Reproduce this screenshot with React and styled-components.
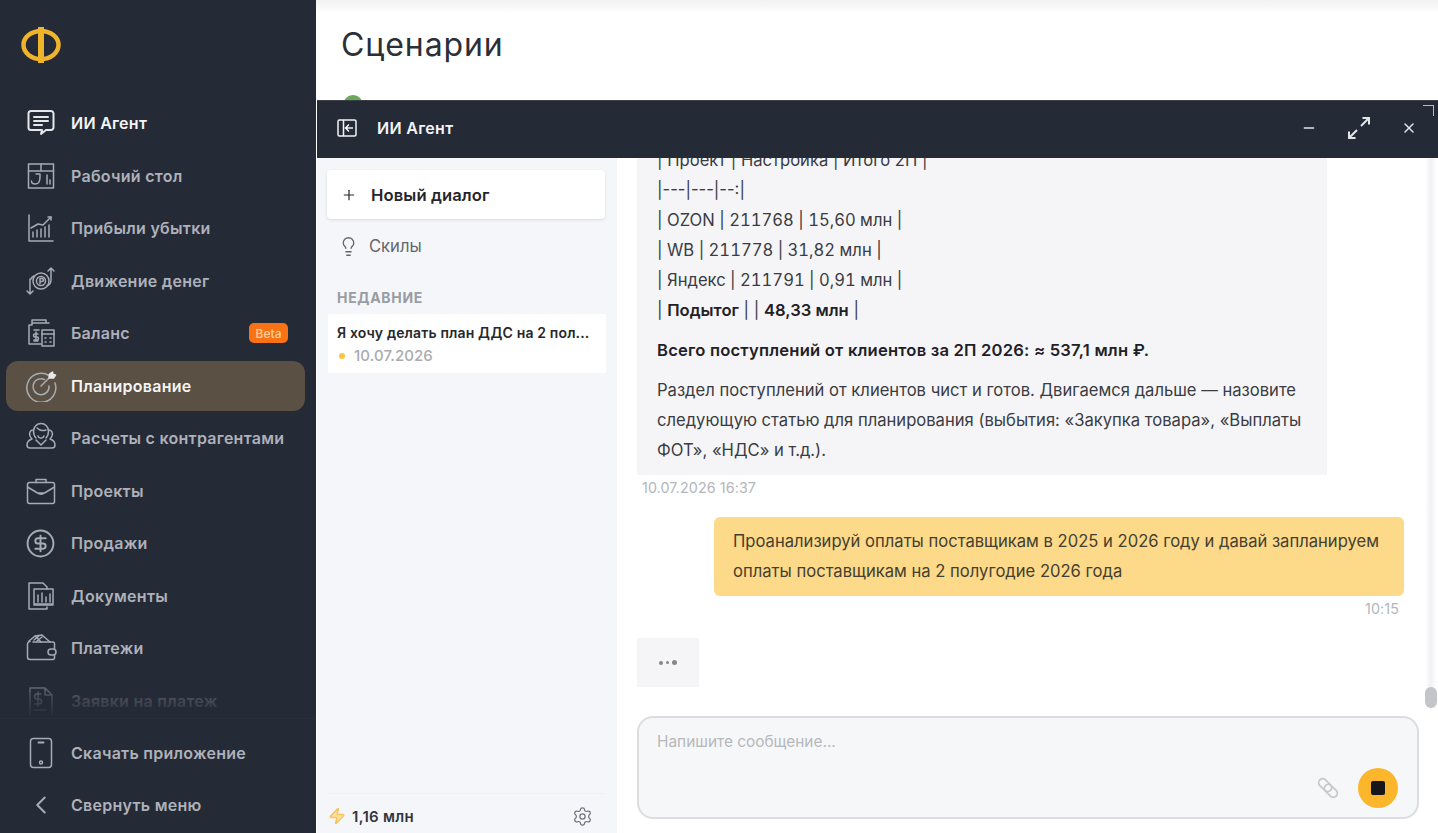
import React from 'react';
import styled, { createGlobalStyle } from 'styled-components';
import { Plus, Lightbulb, Minus, X, Settings, Zap, ChevronLeft, CircleDollarSign } from 'lucide-react';

const GlobalStyle = createGlobalStyle`
  html, body {
    margin: 0;
    height: 100%;
    background: #fff;
  }
  body {
    font-family: Inter, "Noto Sans", "Liberation Sans", sans-serif;
    overflow: hidden;
  }
  * {
    box-sizing: border-box;
  }
`;

const Page = styled.div`
  display: flex;
  height: 833px;
  overflow: hidden;
`;

const Sidebar = styled.aside`
  display: flex;
  flex-direction: column;
  flex: 0 0 316px;
  height: 833px;
  background: #252a37;
`;

const LogoWrap = styled.div`
  display: flex;
  align-items: center;
  height: 98px;
  padding: 0 0 8px 20px;
`;

const Nav = styled.nav`
  position: relative;
  flex: 1;
  min-height: 0;
  overflow: hidden;
  display: flex;
  flex-direction: column;
  gap: 2.5px;
  padding: 0 11px 0 6px;

  &::after {
    content: '';
    position: absolute;
    left: 0;
    right: 0;
    bottom: 0;
    height: 48px;
    background: linear-gradient(to bottom, rgba(37, 42, 55, 0.1), rgba(37, 42, 55, 0.72) 55%, #252a37);
  }
`;

const NavItem = styled.a`
  display: flex;
  align-items: center;
  flex: 0 0 50px;
  gap: 13px;
  padding: 0 17px;
  border-radius: 12px;
  color: ${p => (p.$bright ? '#f4f4f5' : '#aeb1b9')};
  background: ${p => (p.$active ? '#5a5044' : 'transparent')};
  font-size: 16px;
  font-weight: 600;
  letter-spacing: 0.27px;
  white-space: nowrap;
`;

const IconSlot = styled.span`
  display: flex;
  justify-content: center;
  flex: 0 0 35px;
  color: ${p => (p.$bright ? '#e6e7ea' : '#a7abb4')};
`;

const BetaBadge = styled.span`
  margin-left: auto;
  padding: 2.5px 6.5px;
  border-radius: 5px;
  background: #f97316;
  color: #ffcf9a;
  font-size: 12px;
  font-weight: 500;
  letter-spacing: 0;
  line-height: 15px;
`;

const SidebarFooter = styled.div`
  display: flex;
  flex-direction: column;
  gap: 2px;
  height: 115px;
  padding: 9px 11px 0 6px;
  border-top: 1px solid #2a2f3c;
`;

const Main = styled.main`
  position: relative;
  flex: 1;
  min-width: 0;
  background: linear-gradient(to bottom, #f2f2f3, #fff 14px);
`;

const Title = styled.h1`
  margin: 0;
  padding: 24px 0 0 25px;
  font-size: 32px;
  font-weight: 400;
  line-height: 42px;
  color: #2b2f38;
  letter-spacing: 0.9px;
`;

const StatusDot = styled.span`
  display: block;
  width: 20px;
  height: 20px;
  margin: 29px 0 0 27px;
  border-radius: 50%;
  background: #6aa85a;
`;

const AgentWindow = styled.section`
  position: absolute;
  left: 1px;
  right: 0;
  top: 100px;
  bottom: 0;
  display: flex;
  flex-direction: column;
  background: #fff;
`;

const WindowHeader = styled.header`
  position: relative;
  display: flex;
  align-items: center;
  flex: 0 0 58px;
  padding: 0 21px 3px 20px;
  background: #252a37;
  color: #f4f4f5;
  border-top: 1px solid #3b3e47;
`;

const WindowTitle = styled.span`
  margin-left: 20px;
  font-size: 16px;
  font-weight: 600;
  letter-spacing: 0.3px;
`;

const HeaderActions = styled.div`
  display: flex;
  align-items: center;
  gap: 30px;
  margin-left: auto;
  color: #e4e5e8;
`;

const ResizeCorner = styled.span`
  position: absolute;
  top: 4px;
  right: 4px;
  width: 11px;
  height: 11px;
  border-top: 1.5px solid #b9bbc1;
  border-right: 1.5px solid #b9bbc1;
`;

const WindowBody = styled.div`
  flex: 1;
  min-height: 0;
  display: flex;
`;

const Dialogs = styled.div`
  display: flex;
  flex-direction: column;
  flex: 0 0 300px;
  padding: 12px 12px 0 10px;
  background: #f5f6f9;
`;

const NewDialog = styled.button`
  display: flex;
  align-items: center;
  gap: 14px;
  height: 49px;
  padding: 0 14px;
  border: 0;
  border-radius: 4px;
  background: #fff;
  box-shadow: 0 1px 3px rgba(30, 35, 50, 0.12);
  color: #24262c;
  font: 600 16.6px Inter, sans-serif;
  letter-spacing: 0.1px;
`;

const SkillsRow = styled.div`
  display: flex;
  align-items: center;
  gap: 10px;
  height: 54px;
  padding-left: 11px;
  color: #64666d;
  font-size: 16.6px;
`;

const SectionLabel = styled.div`
  margin-top: 15px;
  padding-left: 10px;
  color: #9a9ca3;
  font-size: 14px;
  font-weight: 700;
  line-height: 20px;
  letter-spacing: 0.7px;
`;

const ChatCard = styled.div`
  height: 59px;
  margin: 6px -1px 0 1px;
  padding: 9px;
  background: #fff;
`;

const ChatTitle = styled.div`
  overflow: hidden;
  color: #26282e;
  font-size: 14px;
  font-weight: 600;
  line-height: 19px;
  letter-spacing: 0.15px;
  white-space: nowrap;
`;

const ChatDate = styled.div`
  display: flex;
  align-items: center;
  gap: 9px;
  margin-top: 4px;
  padding-left: 2px;
  color: #a9abb0;
  font-size: 15px;
  font-weight: 500;
  line-height: 19px;
  letter-spacing: 0.1px;
`;

const Dot = styled.i`
  width: 6px;
  height: 6px;
  border-radius: 50%;
  background: #f8c544;
`;

const DialogsFooter = styled.div`
  display: flex;
  align-items: center;
  gap: 6px;
  height: 40px;
  margin-top: auto;
  padding: 5px 12px 0 1px;
  border-top: 1px solid #f0f1f4;
  color: #33353b;
  font-size: 15px;
  font-weight: 600;
  letter-spacing: 0.3px;

  svg:last-child {
    margin-left: auto;
    color: #6f7278;
  }
`;

const ChatColumn = styled.div`
  position: relative;
  flex: 1;
  min-width: 0;
  display: flex;
  flex-direction: column;
  background: #fff;
`;

const Messages = styled.div`
  height: 550px;
  overflow: hidden;
  display: flex;
  flex-direction: column;
  justify-content: flex-end;
  padding: 0 34px 21px 20px;

  & > * {
    flex-shrink: 0;
  }
`;

const BotBubble = styled.div`
  width: 690px;
  padding: 0 20px 10px;
  background: #f5f5f8;
  color: #3a3c42;
  font-size: 16.6px;
  line-height: 30px;
`;

const Paragraph = styled.p`
  margin: ${p => (p.$gap ? '10px 0 0' : '0')};
  color: ${p => (p.$dark ? '#1f2126' : 'inherit')};
  font-weight: ${p => (p.$dark ? 600 : 400)};
  letter-spacing: ${p => (p.$dark ? '0.2px' : '0')};
  font-variant-numeric: ${p => (p.$cells ? 'tabular-nums' : 'normal')};
`;

const Strong = styled.b`
  color: #1f2126;
  font-weight: 600;
`;

const Stamp = styled.div`
  align-self: ${p => (p.$right ? 'flex-end' : 'flex-start')};
  margin: 4px ${p => (p.$right ? '5px' : '0')} 0 5px;
  color: #b4b6bb;
  font-size: 14.3px;
  line-height: 17px;
  letter-spacing: 0.1px;
`;

const UserBubble = styled.div`
  align-self: flex-end;
  width: 690px;
  margin-top: 21px;
  padding: 9px 19px 10px;
  border-radius: 6px;
  background: #fdd98a;
  color: #44402f;
  font-size: 16.6px;
  line-height: 30px;
`;

const TypingBubble = styled.div`
  display: flex;
  align-items: center;
  justify-content: center;
  gap: 3px;
  width: 62px;
  height: 49px;
  margin-top: 21px;
  background: #f5f5f8;
`;

const TypingDot = styled.i`
  width: ${p => p.$size}px;
  height: ${p => p.$size}px;
  border-radius: 50%;
  background: #85878d;
`;

const ScrollTrack = styled.div`
  position: absolute;
  top: 0;
  right: 1px;
  width: 12px;
  height: 550px;
  background: linear-gradient(to right, #fff, #f1f1f3 50%, #fff);
`;

const ScrollThumb = styled.div`
  position: absolute;
  left: 0;
  right: 0;
  bottom: 0;
  height: 21px;
  border-radius: 6px;
  background: #c4c5c8;
`;

const Composer = styled.div`
  position: relative;
  height: 103px;
  margin: 8px 19px 0 20px;
  padding: 14px 18px;
  border: 2px solid #dcdde0;
  border-radius: 16px;
  background: #f6f7f9;
  color: #b6b8bd;
  font-size: 15.4px;
  line-height: 20px;
`;

const ComposerActions = styled.div`
  position: absolute;
  right: 19px;
  bottom: 9px;
  display: flex;
  align-items: center;
  gap: 18px;
  color: #c6c8cc;
`;

const StopButton = styled.button`
  display: flex;
  align-items: center;
  justify-content: center;
  width: 40px;
  height: 40px;
  padding: 0;
  border: 0;
  border-radius: 50%;
  background: #fbb62c;
`;

const StopSquare = styled.i`
  width: 14px;
  height: 14px;
  border-radius: 2px;
  background: #17171a;
`;

const LogoIcon = () => (
  <svg width="42" height="42" viewBox="0 0 42 42" fill="none" stroke="#f0b32c">
    <ellipse cx="21" cy="21" rx="17.5" ry="14" strokeWidth="4.5" />
    <path d="M21 3v36" strokeWidth="6" />
  </svg>
);

const Line = ({ children, size = 32 }) => (
  <svg width={size} height={size} viewBox="0 0 32 32" fill="none" stroke="currentColor" strokeWidth="1.5" strokeLinecap="round" strokeLinejoin="round">
    {children}
  </svg>
);

const AgentIcon = () => (
  <Line>
    <path d="M6 4h20a2.500 2.500 0 0 1 2.500 2.500v14a2.500 2.500 0 0 1-2.500 2.500h-5l-5 4 1-4H6a2.500 2.500 0 0 1-2.500-2.500v-14A2.500 2.500 0 0 1 6 4z" strokeWidth="2" />
    <path d="M9 10h14M9 14h14M9 18h8" strokeWidth="2" />
  </Line>
);

const DeskIcon = () => (
  <Line>
    <rect x="3.500" y="4" width="25" height="24" />
    <path d="M3.500 11h25M16 4v7M22 15v9M25 20v4M11 14h4v3M15 17c0 6-2 7-5 7s-3.500-1-3.500-3" />
  </Line>
);

const ProfitIcon = () => (
  <Line>
    <path d="M4 3v26h24" />
    <path d="M8 25v-5M12 25v-7M16 25v-8M20 25v-10M24 25v-12M6 16l7-4 5 1 8-8" />
    <path d="M23 5h3v3" />
  </Line>
);

const MoneyFlowIcon = () => (
  <Line>
    <circle cx="16" cy="16" r="8" />
    <circle cx="16" cy="16" r="4.500" />
    <path d="M15 18.500v-5h2a1.500 1.500 0 0 1 0 3h-2" />
    <path d="M5 14v15M2 26l3 3 3-3M26 3v12M23 6l3-3 3 3M6 14c0-1 1-2 3-3M26 15c0 3-2 5-4 6" />
  </Line>
);

const BalanceIcon = () => (
  <Line>
    <path d="M7 8V3h14v3h3M7 8H4v19h12M21 6H7" />
    <rect x="17" y="13" width="12" height="16" />
    <path d="M17 17h12M20 21h1M25 21h1M20 25h1M25 25h1M9 13h5M9 24h4" />
    <path d="M11 15v8M13 17h-3a1 1 0 0 0 0 3h2a1 1 0 0 1 0 3h-3" />
  </Line>
);

const TargetIcon = () => (
  <Line>
    <path d="M24 5.500A14.500 14.500 0 1 0 30 13" />
    <path d="M19.500 9.500A8 8 0 1 0 24 16" />
    <path d="M16 16L26 6" />
    <path d="M24 8l.500-4 3-2 .500 2.500 2.500.500-2 3z" fill="#e8e8e8" stroke="#e8e8e8" />
  </Line>
);

const PartnersIcon = () => (
  <Line>
    <path d="M11 16c-2-2-2.500-4-2.500-7a7.500 7.500 0 0 1 15 0c0 3-.500 5-2.500 7" />
    <path d="M12 6c3 3 6 3 9 2M13 14c1 3 5 3 6 0" />
    <path d="M8.500 8C5 8 4 11 5 14c.500 1 1 2 2 3-3 1-5 3-5 6 0 2 1 3 3 3h22c2 0 3-1 3-3 0-3-2-5-5-6 1-1 1.500-2 2-3 1-3 0-6-3.500-6" />
    <path d="M11 18l5 5 5-5" />
  </Line>
);

const CaseIcon = () => (
  <Line>
    <rect x="2.500" y="7.500" width="27" height="21" rx="2" />
    <path d="M11 7.500V4.500h10v3M2.500 12l10 6h7l10-6M13 18c1 1.500 5 1.500 6 0" />
  </Line>
);

const DocsIcon = () => (
  <Line>
    <path d="M22 27v2H4V3h14l4 4v2" />
    <rect x="9" y="9" width="19" height="16" />
    <path d="M13 22v-7M17 22v-9M21 22v-5M25 22v-8M10 24h17" />
  </Line>
);

const WalletIcon = () => (
  <Line>
    <path d="M8 10h20a1.500 1.500 0 0 1 1.500 1.500V17M29.500 23v3a1.500 1.500 0 0 1-1.500 1.500H5A2.500 2.500 0 0 1 2.500 25V12A2.500 2.500 0 0 1 5 9.500" />
    <rect x="23" y="17" width="8" height="6" rx="3" />
    <path d="M4 9l6-5 6 6M10 4l7-1 8 7M9 8l5-4M12 9l5-4" />
  </Line>
);

const RequestIcon = () => (
  <Line>
    <path d="M5 30V3h15l7 7v20M20 3v7h7" />
    <path d="M16 9h-4a2 2 0 0 0 0 5h2a2 2 0 0 1 0 5h-4M13 7v14M9 25h12" />
  </Line>
);

const PhoneIcon = () => (
  <Line>
    <rect x="5.500" y="1.500" width="21" height="29" rx="3" />
    <path d="M13.500 5.500h5" strokeWidth="2" />
    <circle cx="16" cy="25.500" r="1.500" />
  </Line>
);

const PanelIcon = () => (
  <svg width="20" height="18" viewBox="0 0 20 18" fill="none" stroke="currentColor" strokeWidth="1.5">
    <rect x="1" y="1" width="18" height="16" rx="1.500" />
    <path d="M6.500 1v16M16 9h-7M12 5.500L8.500 9l3.500 3.500" />
  </svg>
);

const ExpandIcon = () => (
  <svg width="24" height="24" viewBox="0 0 24 24" fill="none" stroke="currentColor" strokeWidth="2">
    <path d="M14 10l8-8M15.500 2H22v6.500M10 14l-8 8M2 15.500V22h6.500" />
  </svg>
);

const ClipIcon = () => (
  <svg width="24" height="24" viewBox="0 0 24 24" fill="none" stroke="currentColor" strokeWidth="1.8">
    <g transform="rotate(45 12 12)">
      <rect x="0.500" y="8" width="15" height="8" rx="4" />
      <rect x="8.500" y="8" width="15" height="8" rx="4" />
    </g>
  </svg>
);

const items = [
  { label: 'Рабочий стол', Icon: DeskIcon },
  { label: 'Прибыли убытки', Icon: ProfitIcon },
  { label: 'Движение денег', Icon: MoneyFlowIcon },
  { label: 'Баланс', Icon: BalanceIcon, beta: true },
  { label: 'Планирование', Icon: TargetIcon, active: true },
  { label: 'Расчеты с контрагентами', Icon: PartnersIcon },
  { label: 'Проекты', Icon: CaseIcon },
  { label: 'Продажи', Icon: () => <CircleDollarSign size={31} strokeWidth={1.5} /> },
  { label: 'Документы', Icon: DocsIcon },
  { label: 'Платежи', Icon: WalletIcon },
  { label: 'Заявки на платеж', Icon: RequestIcon },
];

export default function App() {
  return (
    <Page>
      <GlobalStyle />
      <Sidebar>
        <LogoWrap>
          <LogoIcon />
        </LogoWrap>
        <Nav>
          <NavItem $bright>
            <IconSlot $bright>
              <AgentIcon />
            </IconSlot>
            ИИ Агент
          </NavItem>
          {items.map(({ label, Icon, beta, active }) => (
            <NavItem key={label} $active={active} $bright={active}>
              <IconSlot>
                <Icon />
              </IconSlot>
              {label}
              {beta && <BetaBadge>Beta</BetaBadge>}
            </NavItem>
          ))}
        </Nav>
        <SidebarFooter>
          <NavItem>
            <IconSlot>
              <PhoneIcon />
            </IconSlot>
            Скачать приложение
          </NavItem>
          <NavItem>
            <IconSlot>
              <ChevronLeft size={30} strokeWidth={1.6} />
            </IconSlot>
            Свернуть меню
          </NavItem>
        </SidebarFooter>
      </Sidebar>
      <Main>
        <Title>Сценарии</Title>
        <StatusDot />
        <AgentWindow>
          <WindowHeader>
            <PanelIcon />
            <WindowTitle>ИИ Агент</WindowTitle>
            <HeaderActions>
              <Minus size={16} />
              <ExpandIcon />
              <X size={16} strokeWidth={2.2} />
            </HeaderActions>
            <ResizeCorner />
          </WindowHeader>
          <WindowBody>
            <Dialogs>
              <NewDialog>
                <Plus size={16} strokeWidth={1.8} />
                Новый диалог
              </NewDialog>
              <SkillsRow>
                <Lightbulb size={21} strokeWidth={1.5} />
                Скилы
              </SkillsRow>
              <SectionLabel>НЕДАВНИЕ</SectionLabel>
              <ChatCard>
                <ChatTitle>Я хочу делать план ДДС на 2 пол...</ChatTitle>
                <ChatDate>
                  <Dot />
                  10.07.2026
                </ChatDate>
              </ChatCard>
              <DialogsFooter>
                <Zap size={18} color="#f5c65e" fill="#fbe0a2" />
                1,16 млн
                <Settings size={21} strokeWidth={1.4} />
              </DialogsFooter>
            </Dialogs>
            <ChatColumn>
              <Messages>
                <BotBubble>
                  <Paragraph>| Проект | Настройка | Итого 2П |</Paragraph>
                  <Paragraph>|---|---|--:|</Paragraph>
                  <Paragraph $cells>| OZON | 211768 | 15,60 млн |</Paragraph>
                  <Paragraph $cells>| WB | 211778 | 31,82 млн |</Paragraph>
                  <Paragraph $cells>| Яндекс | 211791 | 0,91 млн |</Paragraph>
                  <Paragraph>
                    | <Strong>Подытог</Strong> | | <Strong>48,33 млн</Strong> |
                  </Paragraph>
                  <Paragraph $gap $dark>
                    Всего поступлений от клиентов за 2П 2026: ≈ 537,1 млн ₽.
                  </Paragraph>
                  <Paragraph $gap>
                    Раздел поступлений от клиентов чист и готов. Двигаемся дальше — назовите следующую статью для планирования (выбытия: «Закупка товара», «Выплаты ФОТ», «НДС» и т.д.).
                  </Paragraph>
                </BotBubble>
                <Stamp>10.07.2026 16:37</Stamp>
                <UserBubble>
                  Проанализируй оплаты поставщикам в 2025 и 2026 году и давай запланируем оплаты поставщикам на 2 полугодие 2026 года
                </UserBubble>
                <Stamp $right>10:15</Stamp>
                <TypingBubble>
                  <TypingDot $size={4} />
                  <TypingDot $size={3} />
                  <TypingDot $size={5} />
                </TypingBubble>
              </Messages>
              <ScrollTrack>
                <ScrollThumb />
              </ScrollTrack>
              <Composer>
                Напишите сообщение...
                <ComposerActions>
                  <ClipIcon />
                  <StopButton>
                    <StopSquare />
                  </StopButton>
                </ComposerActions>
              </Composer>
            </ChatColumn>
          </WindowBody>
        </AgentWindow>
      </Main>
    </Page>
  );
}
